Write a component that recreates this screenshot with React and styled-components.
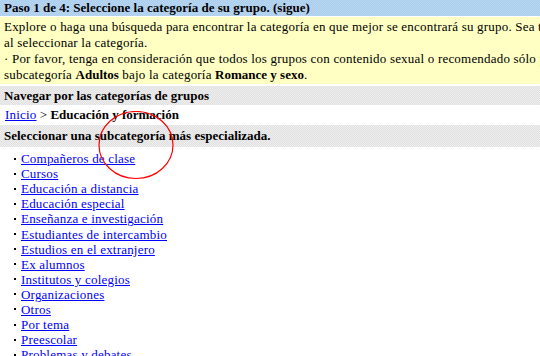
import React from 'react'
import styled, { createGlobalStyle } from 'styled-components'

const GlobalStyle = createGlobalStyle`
body {
  margin: 0;
  background: #fff;
  overflow: hidden;
  font-family: "Liberation Serif", "Times New Roman", serif;
  font-size: 13px;
  color: #000;
}
`

const Page = styled.div`
width: 700px;
position: relative;
`

const StepBar = styled.div`
height: 16px;
line-height: 16px;
padding: 0 4px;
font-weight: bold;
white-space: nowrap;
background-color: #b9d7f1;
background-image: repeating-conic-gradient(#aacdee 0 25%, transparent 0 50%);
background-size: 2px 2px;
`

const Notice = styled.div`
margin-top: 1px;
background: #ffffc4;
padding: 2px 4px 1px;
line-height: 16px;
letter-spacing: 0.2px;
white-space: nowrap;
b {
  letter-spacing: 0;
}
`

const SectionBar = styled.div`
margin-top: ${(p) => p.gap || 0}px;
height: ${(p) => p.h || 20}px;
line-height: ${(p) => p.h || 20}px;
padding: 0 4px;
font-weight: bold;
white-space: nowrap;
background-color: #eeeeee;
background-image: repeating-conic-gradient(#e0e0e0 0 25%, transparent 0 50%);
background-size: 2px 2px;
`

const Crumbs = styled.div`
height: 20px;
line-height: 20px;
padding: 0 5px;
`

const Link = styled.a`
color: #0000ff;
text-decoration: underline;
letter-spacing: 0.2px;
`

const List = styled.ul`
list-style: none;
margin: 0;
padding: 4px 0 0 14px;
`

const Item = styled.li`
height: 15.1px;
line-height: 15px;
display: flex;
align-items: center;
&::before {
  content: '';
  width: 2px;
  height: 2px;
  background: #000;
  margin-right: 5px;
}
`

const Mark = styled.svg`
position: absolute;
left: 98px;
top: 111px;
`

const subcats = [
  'Compañeros de clase',
  'Cursos',
  'Educación a distancia',
  'Educación especial',
  'Enseñanza e investigación',
  'Estudiantes de intercambio',
  'Estudios en el extranjero',
  'Ex alumnos',
  'Institutos y colegios',
  'Organizaciones',
  'Otros',
  'Por tema',
  'Preescolar',
  'Problemas y debates',
]

export default function App() {
  return (
    <>
      <GlobalStyle />
      <Page>
        <StepBar>Paso 1 de 4: Seleccione la categoría de su grupo. (sigue)</StepBar>
        <Notice>
          Explore o haga una búsqueda para encontrar la categoría en que mejor se encontrará su grupo. Sea tan específico como sea posible
          <br />
          al seleccionar la categoría.
          <br />
          · Por favor, tenga en consideración que todos los grupos con contenido sexual o recomendado sólo para adultos deben ubicarse en la
          <br />
          subcategoría <b>Adultos</b> bajo la categoría <b>Romance y sexo</b>.
        </Notice>
        <SectionBar gap={2} h={19}>Navegar por las categorías de grupos</SectionBar>
        <Crumbs>
          <Link href="#">Inicio</Link> &gt; <b>Educación y formación</b>
        </Crumbs>
        <SectionBar h={22}>Seleccionar una subcategoría más especializada.</SectionBar>
        <List>
          {subcats.map((s) => (
            <Item key={s}>
              <Link href="#">{s}</Link>
            </Item>
          ))}
        </List>
        <Mark width="78" height="70" viewBox="0 0 78 70">
          <ellipse cx="38" cy="34" rx="37" ry="33.5" fill="none" stroke="#ff0000" strokeWidth="1.2" />
        </Mark>
      </Page>
    </>
  )
}
